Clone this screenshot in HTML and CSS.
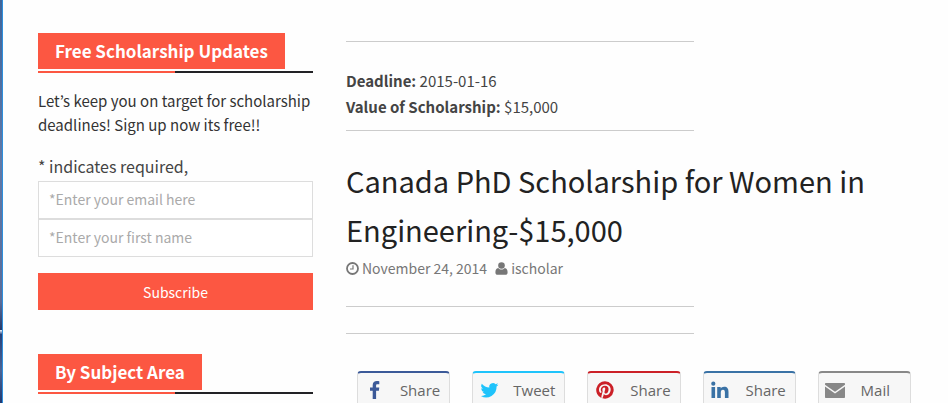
FILE: index.html
```html
<!DOCTYPE html>
<html lang="en">
<head>
<meta charset="utf-8">
<title>Canada PhD Scholarship for Women in Engineering</title>
<link rel="stylesheet" href="styles.css">
</head>
<body>
<div class="page">
  <div class="edge"></div>
  <aside class="sidebar">
    <section class="widget">
      <div class="widget-head"><h2 class="ribbon">Free Scholarship Updates</h2></div>
      <p class="intro">Let’s keep you on target for scholarship deadlines! Sign up now its free!!</p>
      <form class="signup">
        <p class="required">* indicates required,</p>
        <input class="field" type="email" aria-label="Email" placeholder="*Enter your email here">
        <input class="field" type="text" aria-label="First name" placeholder="*Enter your first name">
        <button class="subscribe" type="submit">Subscribe</button>
      </form>
    </section>
    <section class="widget">
      <div class="widget-head"><h2 class="ribbon">By Subject Area</h2></div>
    </section>
  </aside>
  <main class="content">
    <hr class="rule">
    <div class="facts">
      <p><b>Deadline:</b> 2015-01-16</p>
      <p><b>Value of Scholarship:</b> $15,000</p>
    </div>
    <hr class="rule">
    <h1 class="title">Canada PhD Scholarship for Women in Engineering-$15,000</h1>
    <div class="meta">
      <span class="meta-item">
        <svg width="13" height="13" viewBox="0 0 13 13" fill="none" stroke="currentColor"><circle cx="6.500" cy="6.500" r="5.500" stroke-width="1.800"/><path d="M7 3.200V7H4" stroke-width="1.200"/></svg>
        <time datetime="2014-11-24">November 24, 2014</time>
      </span>
      <span class="meta-item author">
        <svg width="13" height="13" viewBox="0 0 13 13" fill="currentColor"><circle cx="6.500" cy="3.500" r="3.300"/><path d="M3.300 5.900C1.100 6.200.4 8 .4 10.400.4 12 1.300 12.800 2.600 12.800h7.800c1.300 0 2.200-.8 2.200-2.400 0-2.400-.7-4.200-2.900-4.500C8.800 7 7.700 7.500 6.500 7.500S4.200 7 3.300 5.900z"/></svg>
        <span>ischolar</span>
      </span>
    </div>
    <hr class="rule">
    <hr class="rule rule-close">
    <nav class="share" aria-label="Share">
      <a class="share-btn facebook" href="#"><svg width="20" height="20" viewBox="0 0 20 20" fill="currentColor"><path d="M15.300 1.200v3.100h-1.800c-1.100 0-1.400.5-1.400 1.300v1.900h3.200l-.4 3.200h-2.800V19H8.700v-8.300H6V7.500h2.700V5.100C8.700 2.400 10.400 1 12.900 1c1.100 0 2.100.1 2.400.2z"/></svg><span>Share</span></a>
      <a class="share-btn twitter" href="#"><svg width="20" height="20" viewBox="-2.500 -1.500 27 27" fill="currentColor"><path d="M23.600 4.900a9.900 9.900 0 0 1-2.800.8 4.900 4.900 0 0 0 2.200-2.700c-1 .6-2 1-3.100 1.200a4.900 4.900 0 0 0-8.400 4.500A14 14 0 0 1 1.300 3.500a4.900 4.900 0 0 0 1.500 6.600c-.8 0-1.600-.2-2.200-.6a4.900 4.900 0 0 0 3.900 4.900c-.7.200-1.500.2-2.200.1a4.900 4.900 0 0 0 4.600 3.400A9.900 9.900 0 0 1 0 20a14 14 0 0 0 21.200-12.600c.9-.7 1.700-1.500 2.400-2.500z"/></svg><span>Tweet</span></a>
      <a class="share-btn pinterest" href="#"><svg width="20" height="20" viewBox="-1 0 24 24" fill="currentColor"><path d="M12 1.600a10.400 10.400 0 0 0-4.200 19.900c0-.7 0-1.600.2-2.400l1.400-5.700s-.3-.7-.3-1.700c0-1.600.9-2.700 2-2.700 1 0 1.400.7 1.400 1.600 0 1-.6 2.400-.9 3.700-.3 1.100.5 2 1.600 2 2 0 3.300-2.500 3.300-5.500 0-2.300-1.500-4-4.300-4-3.200 0-5.100 2.400-5.100 5 0 .9.300 1.500.7 2 .2.200.2.300.1.600l-.2.900c-.1.300-.3.400-.6.300-1.500-.6-2.100-2.200-2.100-4 0-3 2.500-6.500 7.400-6.500 4 0 6.600 2.900 6.600 6 0 4.100-2.300 7.100-5.600 7.100-1.100 0-2.200-.6-2.600-1.300l-.7 2.600c-.2.900-.7 1.700-1.100 2.400A10.400 10.400 0 1 0 12 1.600z"/></svg><span>Share</span></a>
      <a class="share-btn linkedin" href="#"><svg width="20" height="20" viewBox="0 0 20 20" fill="currentColor"><circle cx="3.300" cy="3.700" r="2.100"/><path d="M1.500 7h3.600v11H1.500zM7.200 7h3.500v1.500c.6-1 1.700-1.800 3.400-1.800 3.300 0 4.400 2 4.400 5.300v6h-3.600v-5.500c0-1.600-.4-2.800-1.900-2.800-1.600 0-2.200 1.200-2.200 2.800V18H7.200z"/></svg><span>Share</span></a>
      <a class="share-btn mail" href="#"><svg width="20" height="20" viewBox="0 0 20 20" fill="currentColor"><path d="M1 3h18c.6 0 1 .4 1 1v.7l-10 7-10-7V4c0-.6.400-1 1-1zM0 6.400l10 7 10-7V17c0 .6-.4 1-1 1H1c-.6 0-1-.4-1-1z"/></svg><span>Mail</span></a>
    </nav>
  </main>
</div>
</body>
</html>
```

FILE: styles.css
```css
* { box-sizing: border-box; }

body {
  margin: 0;
  background: #fefefe;
  color: #444;
  font: 15px/24px "Noto Sans CJK KR", "Noto Sans", sans-serif;
}

h1, h2, p { margin: 0; }

.page {
  display: flex;
  height: 100vh;
  overflow: hidden;
}

.edge {
  flex: 0 0 3px;
  border-right: 1px solid #2d8fdc;
  background: linear-gradient(#3f659b, #6079a8 40%, #5a6c99 75%, #24386a 82%, #dbe6f5 82%, #27427c 83%, #4a6496 92%, #1f3972);
}

.sidebar {
  flex: 0 0 275px;
  margin-left: 35px;
  padding-top: 33px;
}

.widget { margin-bottom: 44px; }

.widget-head {
  padding-bottom: 4px;
  background: linear-gradient(90deg, #fc5742 50%, #222226 50%) bottom / 100% 2px no-repeat;
}

.ribbon {
  display: inline-block;
  padding: 0 17px;
  background: #fc5742;
  color: #fff;
  font-size: 17px;
  font-weight: 700;
  line-height: 36px;
  vertical-align: top;
}

.intro {
  margin-top: 16px;
  color: #333;
}

.signup { margin-top: 16px; }

.required {
  padding-bottom: 2px;
  font-size: 16px;
  line-height: 26px;
}

.field {
  display: block;
  width: 100%;
  height: 38px;
  padding: 0 10px 2px;
  border: 1px solid #ddd;
  background: #fff;
  font: 14px "Noto Sans CJK KR", "Noto Sans", sans-serif;
}

.field::placeholder { color: #aaa; opacity: 1; }

.subscribe {
  display: block;
  width: 100%;
  height: 37px;
  margin-top: 16px;
  border: 0;
  background: #fc5742;
  color: #fff;
  font: 14px "Noto Sans CJK KR", "Noto Sans", sans-serif;
}

.content {
  flex: 1;
  min-width: 0;
  padding: 41px 22px 0 33px;
}

.rule {
  width: 60%;
  height: 1px;
  margin: 0;
  border: 0;
  background: #ccc;
}

.facts {
  padding: 26px 0 10px;
  line-height: 26px;
}

.title {
  margin: 25px 0 2px;
  color: #222;
  font-size: 29px;
  font-weight: 400;
  line-height: 49px;
}

.meta {
  display: flex;
  gap: 8px;
  margin-bottom: 26px;
  color: #777;
  font-size: 14px;
}

.meta-item {
  display: flex;
  align-items: center;
  gap: 3px;
}

.rule-close { margin-top: 26px; }

.share {
  display: grid;
  grid-template-columns: repeat(5, 1fr);
  gap: 22px;
  margin: 37px 15px 0 11px;
}

.share-btn {
  display: flex;
  align-items: center;
  justify-content: space-between;
  height: 38px;
  padding: 0 9px 2px 6px;
  border: 1px solid #ddd;
  border-top: 2px solid currentColor;
  border-radius: 4px;
  background: #f7f7f7;
  font: 15px "Open Sans", sans-serif;
  text-decoration: none;
}

.share-btn span { color: #666; }

.facebook { color: #3b5998; }
.twitter { color: #1fc3fb; }
.pinterest { color: #cb2027; }
.linkedin { color: #3a72a5; }
.mail { color: #888; }
.mail span { margin-right: 11px; }
```
